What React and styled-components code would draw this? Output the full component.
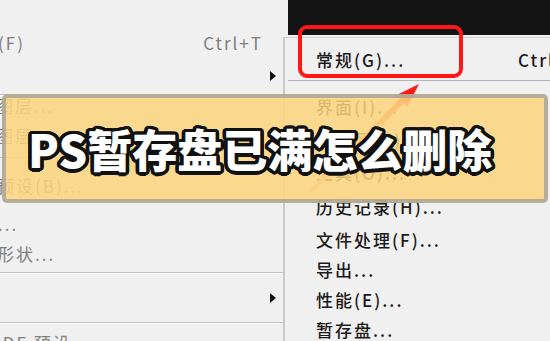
import React from 'react';
import styled, { createGlobalStyle } from 'styled-components';

const outline = (r, c, n = 24) => {
  const out = [];
  for (let i = 0; i < n; i++) {
    const a = (i / n) * Math.PI * 2;
    out.push(`${(Math.cos(a) * r).toFixed(2)}px ${(Math.sin(a) * r).toFixed(2)}px 0 ${c}`);
  }
  return out.join(', ');
};
const titleShadow = [outline(3.5, '#111'), outline(2, '#111', 12)].join(', ');

const Global = createGlobalStyle`
  html, body { margin: 0; padding: 0; background: #f0f0f0; }
  body { font-family: "Noto Sans CJK SC", "Noto Sans", sans-serif; }
`;

const Stage = styled.div`
  position: relative;
  width: 550px;
  height: 341px;
  overflow: hidden;
  background: #f0f0f0;
  display: flex;
`;

const LeftMenu = styled.div`
  width: 283px;
  flex: none;
  display: flex;
  flex-direction: column;
  padding-top: 25px;
  box-sizing: border-box;
  color: #7f7f7f;
`;

const MenuRow = styled.div`
  height: ${(p) => p.$h}px;
  flex: none;
  display: flex;
  align-items: center;
  font-size: 17px;
  letter-spacing: 2px;
  white-space: nowrap;
  padding-left: ${(p) => p.$indent || 0}px;
`;

const Label = styled.span`
  margin-left: ${(p) => p.$shift || 0}px;
`;

const Shortcut = styled.span`
  margin-left: auto;
  margin-right: 20px;
`;

const ClippedShortcut = styled.span`
  margin-left: auto;
  width: 32px;
  white-space: nowrap;
`;

const SubArrow = styled.span`
  margin-left: auto;
  margin-right: 7px;
  width: 0;
  height: 0;
  border-top: 5px solid transparent;
  border-bottom: 5px solid transparent;
  border-left: 6px solid #111;
`;

const Sep = styled.div`
  flex: none;
  height: 1px;
  margin: 1px 0;
  background: #c2c2c2;
  box-shadow: 0 1px 0 #fbfbfb;
`;

const RightCol = styled.div`
  flex: 1;
  display: flex;
  flex-direction: column;
`;

const BlackBar = styled.div`
  flex: none;
  height: 35px;
  margin-left: 5px;
  background: #131313;
`;

const Panel = styled.div`
  flex: 1;
  margin-top: 2px;
  border-left: 2px solid #c9c9c9;
  border-top: 1px solid #d2d2d2;
  display: flex;
  flex-direction: column;
  color: #1b1b1b;
  font-weight: 500;
`;

const PanelSep = styled.div`
  flex: none;
  height: 1px;
  margin: 0 0 9px 3px;
  background: #b5b5b5;
`;

const RedBox = styled.div`
  position: absolute;
  left: 298px;
  top: 25px;
  width: 165px;
  height: 53px;
  box-sizing: border-box;
  border: 4px solid #ff1616;
  border-radius: 9px;
`;

const ArrowSvg = styled.svg`
  position: absolute;
  left: 0;
  top: 0;
  pointer-events: none;
`;

const Banner = styled.div`
  position: absolute;
  left: 2px;
  top: 94px;
  width: 546px;
  height: 109px;
  box-sizing: border-box;
  border: 4px solid rgba(155, 155, 155, 0.72);
  border-radius: 5px;
  background: rgba(252, 213, 126, 0.86);
  display: flex;
  align-items: center;
  padding-left: 22px;
`;

const Title = styled.h1`
  margin: 0;
  font-family: "Noto Sans CJK SC", "Noto Sans", sans-serif;
  font-size: 45px;
  font-weight: 900;
  line-height: 1;
  color: #ffffff;
  white-space: nowrap;
  text-shadow: ${titleShadow};
`;

const leftRows = [
  { type: 'row', h: 34, label: '(F)', shift: -2, shortcut: 'Ctrl+T' },
  { type: 'row', h: 34, arrow: true },
  { type: 'sep' },
  { type: 'row', h: 18, label: '图层...', shift: -4 },
  { type: 'row', h: 42, label: '图层...', shift: -4 },
  { type: 'sep' },
  { type: 'row', h: 52, label: '预设(B)...', shift: -3 },
  { type: 'row', h: 24, label: '...', shift: -2 },
  { type: 'row', h: 36, label: '形状...', shift: -3 },
  { type: 'sep' },
  { type: 'row', h: 47, arrow: true },
  { type: 'sep' },
  { type: 'row', h: 36, label: 'PDF 预设...', shift: -10 },
];

const prefRows = [
  { h: 33, label: '界面(I)...' },
  { h: 33, label: '工作区(K)...' },
  { h: 33, label: '工具(O)...' },
  { h: 35, label: '历史记录(H)...' },
  { h: 30, label: '文件处理(F)...' },
  { h: 30, label: '导出...' },
  { h: 30, label: '性能(E)...' },
  { h: 30, label: '暂存盘...' },
];

export default function App() {
  return (
    <>
      <Global />
      <Stage>
        <LeftMenu>
          {leftRows.map((r, i) =>
            r.type === 'sep' ? (
              <Sep key={i} />
            ) : (
              <MenuRow key={i} $h={r.h}>
                {r.label && <Label $shift={r.shift}>{r.label}</Label>}
                {r.shortcut && <Shortcut>{r.shortcut}</Shortcut>}
                {r.arrow && <SubArrow />}
              </MenuRow>
            )
          )}
        </LeftMenu>
        <RightCol>
          <BlackBar />
          <Panel>
            <MenuRow $h={42} $indent={31}>
              <Label>常规(G)...</Label>
              <ClippedShortcut>Ctrl+K</ClippedShortcut>
            </MenuRow>
            <PanelSep />
            {prefRows.map((r, i) => (
              <MenuRow key={i} $h={r.h} $indent={31}>
                <Label>{r.label}</Label>
              </MenuRow>
            ))}
          </Panel>
        </RightCol>

        <ArrowSvg width="550" height="341" viewBox="0 0 550 341">
          <defs>
            <linearGradient id="arrowGrad" gradientUnits="userSpaceOnUse" x1="310" y1="192" x2="419" y2="84">
              <stop offset="0" stopColor="#f6b48a" />
              <stop offset="0.55" stopColor="#f58a52" />
              <stop offset="1" stopColor="#ff1a1a" />
            </linearGradient>
          </defs>
          <polygon points="311,193.5 308.8,191 400,98.6 404,103" fill="url(#arrowGrad)" />
          <polygon points="419,84 407.6,106.6 396.3,95.2" fill="#ff1a1a" />
        </ArrowSvg>
        <RedBox />

        <Banner>
          <Title>PS暂存盘已满怎么删除</Title>
        </Banner>
      </Stage>
    </>
  );
}
